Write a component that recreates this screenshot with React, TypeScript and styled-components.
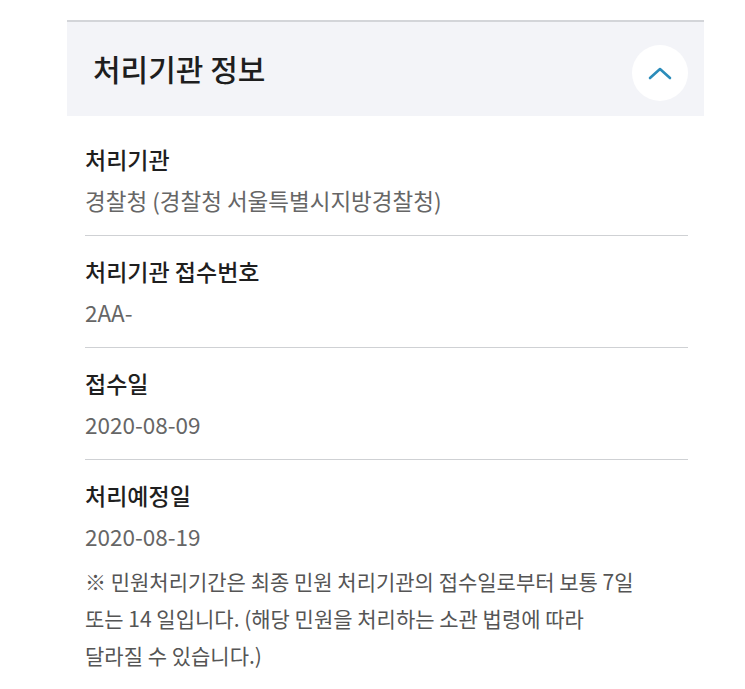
import React from "react";
import styled, { createGlobalStyle } from "styled-components";

const Global = createGlobalStyle`
  html, body { margin: 0; padding: 0; background: #ffffff; }
  body { font-family: "Noto Sans CJK KR", "Noto Sans", sans-serif; }
`;

const Page = styled.div`
  width: 745px;
  height: 689px;
  overflow: hidden;
  padding-top: 20px;
  box-sizing: border-box;
`;

const Panel = styled.section`
  margin-left: 67px;
  width: 637px;
  border-top: 2px solid #d3d5d9;
`;

const Header = styled.div`
  height: 94px;
  background: #f3f4f8;
  display: flex;
  align-items: center;
  justify-content: space-between;
  padding: 0 16px 0 26px;
  box-sizing: border-box;
`;

const Title = styled.h2`
  margin: -2px 0 0;
  font-size: 30px;
  font-weight: 500;
  color: #1e1e1e;
`;

const ToggleButton = styled.button`
  width: 56px;
  height: 56px;
  border-radius: 50%;
  border: none;
  background: #ffffff;
  display: flex;
  align-items: center;
  justify-content: center;
  padding: 0;
  margin-top: 8px;
`;

const Body = styled.div`
  padding: 8px 16px 0 18px;
`;

const Row = styled.div<{ $divider?: boolean }>`
  padding: 19px 0 ${(p) => (p.$divider ? "19px" : "11px")};
  border-bottom: ${(p) => (p.$divider ? "1px solid #cfd1d4" : "none")};
`;

const Label = styled.div`
  font-size: 23px;
  line-height: 32px;
  font-weight: 500;
  color: #1f1f1f;
`;

const Value = styled.div`
  font-size: 22.5px;
  line-height: 32px;
  color: #666666;
  margin-top: 9px;
`;

const Note = styled.p`
  margin: 0;
  font-size: 21px;
  line-height: 37px;
  color: #555555;
  word-break: keep-all;
`;

const NoteLine = styled.span`
  display: block;
`;

const rows = [
  { label: "처리기관", value: "경찰청 (경찰청 서울특별시지방경찰청)" },
  { label: "처리기관 접수번호", value: "2AA-" },
  { label: "접수일", value: "2020-08-09" },
  { label: "처리예정일", value: "2020-08-19" },
];

const noteLines = [
  "※ 민원처리기간은 최종 민원 처리기관의 접수일로부터 보통 7일",
  "또는 14 일입니다. (해당 민원을 처리하는 소관 법령에 따라",
  "달라질 수 있습니다.)",
];

export default function App() {
  return (
    <Page>
      <Global />
      <Panel>
        <Header>
          <Title>처리기관 정보</Title>
          <ToggleButton aria-label="접기">
            <svg width="26" height="16" viewBox="0 0 26 16" fill="none">
              <path
                d="M3 13 L13 4 L23 13"
                stroke="#2b8cba"
                strokeWidth="2.6"
                strokeLinecap="round"
                strokeLinejoin="round"
              />
            </svg>
          </ToggleButton>
        </Header>
        <Body>
          {rows.map((r, i) => (
            <Row key={r.label} $divider={i < rows.length - 1}>
              <Label>{r.label}</Label>
              <Value>{r.value}</Value>
            </Row>
          ))}
          <Note>
            {noteLines.map((l) => (
              <NoteLine key={l}>{l}</NoteLine>
            ))}
          </Note>
        </Body>
      </Panel>
    </Page>
  );
}
